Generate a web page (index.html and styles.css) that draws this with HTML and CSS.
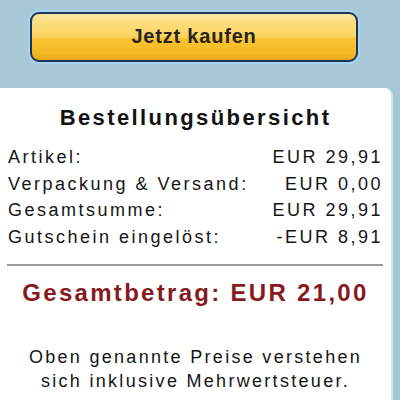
FILE: index.html
```html
<!DOCTYPE html>
<html lang="de">
<head>
<meta charset="utf-8">
<link rel="stylesheet" href="styles.css">
</head>
<body>
<div class="top">
  <button class="buy">Jetzt kaufen</button>
</div>
<div class="panel">
  <h2 class="title">Bestellungsübersicht</h2>
  <div class="rows">
    <div class="row"><span>Artikel:</span><span>EUR 29,91</span></div>
    <div class="row"><span>Verpackung &amp; Versand:</span><span>EUR 0,00</span></div>
    <div class="row"><span>Gesamtsumme:</span><span>EUR 29,91</span></div>
    <div class="row"><span>Gutschein eingelöst:</span><span>-EUR 8,91</span></div>
  </div>
  <hr class="sep">
  <div class="total">Gesamtbetrag: EUR 21,00</div>
  <p class="note">Oben genannte Preise verstehen<br>sich inklusive Mehrwertsteuer.</p>
</div>
</body>
</html>
```
FILE: styles.css
```css
html, body {
  margin: 0;
  padding: 0;
  background: #a8c7d7;
  height: 100%;
  overflow: hidden;
}
body {
  font-family: "Liberation Sans", Arial, sans-serif;
  color: #151515;
}
.top {
  padding: 12px 0 0 30px;
  height: 88px;
  box-sizing: border-box;
}
.buy {
  display: flex;
  align-items: center;
  justify-content: center;
  width: 328px;
  height: 50px;
  box-sizing: border-box;
  border: 2px solid #1d3552;
  border-radius: 9px;
  box-shadow: 0 0 0 2px #a6d4f2;
  background: linear-gradient(to bottom, #fbe7a6 0%, #fcdc7c 20%, #fbd463 48%, #f8c332 55%, #f4b923 85%, #e9a91c 100%);
  font-family: "Liberation Sans", Arial, sans-serif;
  font-weight: bold;
  font-size: 20px;
  letter-spacing: 0.8px;
  color: #2a2317;
  padding: 0 0 2px 0;
}
.panel {
  width: 393px;
  min-height: calc(100vh - 88px);
  box-sizing: border-box;
  background: #fff;
  border-top-right-radius: 8px;
  border-right: 2px solid #d6e3ec;
  padding: 15px 8px 0 8px;
}
.title {
  margin: 0;
  text-align: center;
  font-size: 22px;
  line-height: 30px;
  letter-spacing: 2.4px;
  font-weight: bold;
  color: #121212;
}
.rows {
  margin-top: 11px;
  font-size: 18px;
  letter-spacing: 2.5px;
}
.row {
  display: flex;
  justify-content: space-between;
  line-height: 26.7px;
}
.sep {
  margin: 13px 0 0 -1px;
  border: 0;
  height: 2px;
  background: #9a9a9a;
}
.total {
  margin-top: 12px;
  text-align: center;
  font-size: 24px;
  font-weight: bold;
  line-height: 30px;
  letter-spacing: 2.3px;
  color: #861a1e;
}
.note {
  margin: 37px 0 0 0;
  text-align: center;
  font-size: 18px;
  line-height: 24px;
  letter-spacing: 2.3px;
  color: #151515;
}
```
